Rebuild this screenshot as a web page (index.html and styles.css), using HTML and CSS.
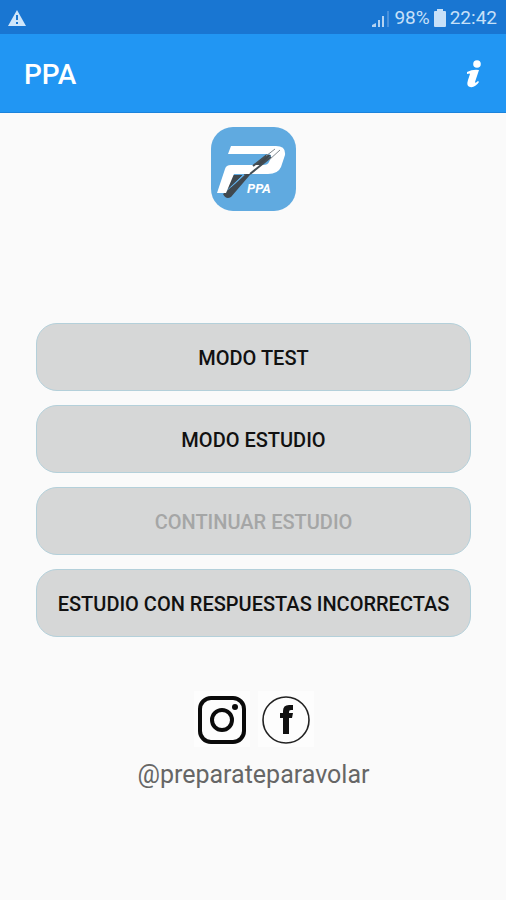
FILE: index.html
```html
<!DOCTYPE html>
<html lang="es">
<head>
<meta charset="utf-8">
<meta name="viewport" content="width=device-width, initial-scale=1">
<title>PPA</title>
<link rel="stylesheet" href="styles.css">
</head>
<body>
<div class="status">
  <svg class="warning" viewBox="0 0 18 16" aria-hidden="true"><path d="M9 0 L18 16 H0 Z" fill="#d0e6fa"/><path d="M8 5h2v5H8zM8 12h2v2H8z" fill="#1976d2"/></svg>
  <div class="status-info">
    <svg class="signal" viewBox="0 0 18 17" aria-hidden="true"><path d="M0 15l4-2v4H0zM6 10h2v7H6zM10 6h2v11h-2z" fill="#b4d3f1"/><path d="M15 1h2v16h-2z" fill="#4991dc"/></svg>
    <span>98%</span>
    <svg class="battery" viewBox="0 0 12 18" aria-hidden="true"><path d="M3 0h6v2h2q1 0 1 1v14q0 1-1 1H1q-1 0-1-1V3q0-1 1-1h2z" fill="#c7e0f8"/></svg>
    <span>22:42</span>
  </div>
</div>
<header class="bar">
  <h1 class="title">PPA</h1>
  <button class="info" type="button" aria-label="Información">
    <svg viewBox="0 0 16 28" aria-hidden="true"><circle cx="11" cy="4" r="3.8" fill="#fff"/><path d="M1 12 Q7 9 13 10 L9 22 Q9 24 12 21 L13 22 Q9 28 4 27 Q0 26 2 20 L4 14 Q4 13 1 14 Z" fill="#fff"/></svg>
  </button>
</header>
<main class="content">
  <svg class="logo" viewBox="0 0 85 84" role="img" aria-label="PPA">
    <rect width="85" height="84" rx="22" fill="#60aae0"/>
    <path d="M44 42 L20 70 Q15 73 12 67 L24 57 L36 46 Z" fill="#3f484f"/>
    <path d="M44 46 L60 28 L55 28 L32 48 Z" fill="#3f484f"/>
    <path d="M18 48 H32 L16 63 Z" fill="#3f484f"/>
    <path d="M34 46 L20 60" fill="none" stroke="#60aae0" stroke-width="1"/>
    <path fill-rule="evenodd" d="M20 19 H65 Q75 19 74 28 L70 40 Q67 47 57 47 H23 L15 66 H6 L14 42 Q15 38 20 38 H52 Q57 38 58 35 L60 31 Q61 27 57 27 H17 Z" fill="#fff"/>
    <path d="M56 28 L42 39 M60 30 L39 47" fill="none" stroke="#444e55" stroke-width="2"/>
    <path d="M64 22 L55 29 M69 23 L58 33" fill="none" stroke="#81898f" stroke-width="1"/>
    <text class="logo-text" x="36" y="66">PPA</text>
  </svg>
  <nav class="menu">
    <button class="option" type="button">MODO TEST</button>
    <button class="option" type="button">MODO ESTUDIO</button>
    <button class="option" type="button" disabled>CONTINUAR ESTUDIO</button>
    <button class="option" type="button">ESTUDIO CON RESPUESTAS INCORRECTAS</button>
  </nav>
  <div class="social">
    <a href="#instagram" aria-label="Instagram"><svg viewBox="0 0 56 56" aria-hidden="true"><rect width="56" height="56" fill="#fdfdfd"/><rect x="6" y="7" width="44" height="44" rx="11" fill="none" stroke="#0b0b0b" stroke-width="4"/><circle cx="28" cy="29" r="10" fill="none" stroke="#0b0b0b" stroke-width="4"/><circle cx="41" cy="16" r="3" fill="#0b0b0b"/></svg></a>
    <a href="#facebook" aria-label="Facebook"><svg viewBox="0 0 56 56" aria-hidden="true"><rect width="56" height="56" fill="#fdfdfd"/><circle cx="28" cy="29" r="23" fill="none" stroke="#222" stroke-width="1.6"/><path d="M25 43 V27 H22 V22 H25 V20 Q25 14 31 14 H35 V19 H33 Q31 19 31 21 V22 H35 L34 27 H31 V43 Z" fill="#111"/></svg></a>
  </div>
  <p class="handle">@preparateparavolar</p>
</main>
</body>
</html>
```
FILE: styles.css
```css
* {
  box-sizing: border-box;
}

body {
  margin: 0;
  min-height: 100vh;
  background: #fafafa;
  font-family: Roboto, "Liberation Sans", sans-serif;
}

.status {
  display: flex;
  align-items: center;
  justify-content: space-between;
  height: 34px;
  padding: 2px 9px 0 8px;
  background: #1976d2;
  color: #c7e0f8;
  font-size: 19px;
  line-height: 24px;
}

.status-info {
  display: flex;
  align-items: center;
  gap: 4px;
}

.warning {
  width: 18px;
  height: 16px;
}

.signal {
  width: 18px;
  height: 17px;
}

.battery {
  width: 12px;
  height: 18px;
}

.bar {
  display: flex;
  align-items: center;
  justify-content: space-between;
  height: 79px;
  padding: 0 24px;
  background: #2196f3;
  border-bottom: 1px solid #1b83dc;
}

.title {
  margin: 0;
  padding-top: 4px;
  color: #fff;
  font-size: 28px;
  font-weight: 500;
  line-height: 32px;
}

.info {
  padding: 2px 0 0;
  border: 0;
  background: none;
}

.info svg {
  display: block;
  width: 16px;
  height: 28px;
}

.content {
  display: flex;
  flex-direction: column;
  align-items: center;
  padding: 14px 35px 14px 36px;
}

.logo {
  width: 85px;
  height: 84px;
}

.logo-text {
  fill: #fff;
  font-size: 13px;
  font-style: italic;
  font-weight: 700;
}

.menu {
  display: flex;
  flex-direction: column;
  gap: 14px;
  width: 100%;
  margin-top: 112px;
}

.option {
  height: 68px;
  padding: 2px 0 0;
  border: 1px solid #b4d0da;
  border-radius: 21px;
  background: #d6d7d7;
  color: #111;
  font-family: inherit;
  font-size: 20px;
  font-weight: 500;
  line-height: 24px;
}

.option:disabled {
  color: #a5a6a6;
}

.social {
  display: flex;
  gap: 8px;
  margin-top: 54px;
}

.social svg {
  display: block;
  width: 56px;
  height: 56px;
}

.handle {
  margin: 12px 0 0;
  color: #666;
  font-size: 25px;
  line-height: 32px;
}
```
